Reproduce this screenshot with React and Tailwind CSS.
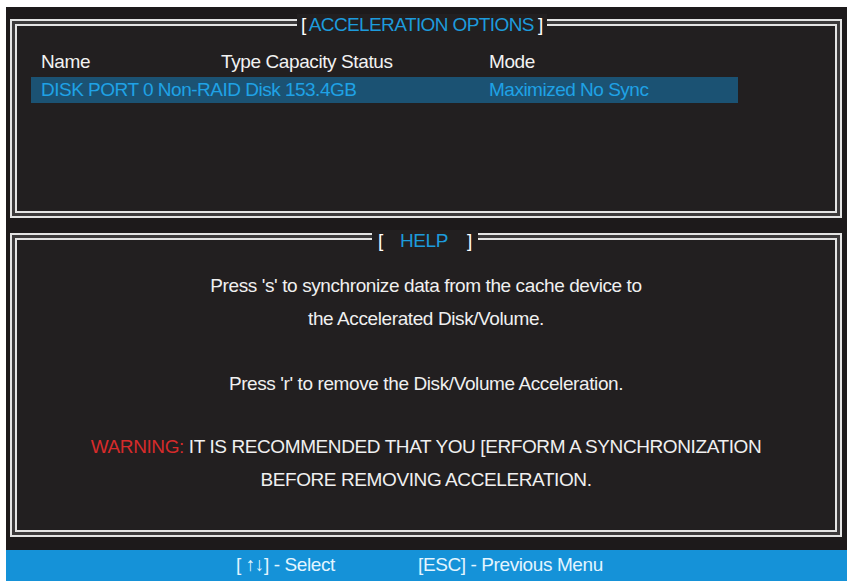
export default function App() {
  const font = { fontFamily: '"Liberation Sans", Arial, sans-serif' };
  return (
    <div className="h-[585px] w-[851px] bg-white pl-[6px] pt-[7px]" style={font}>
      <div className="w-[841px] bg-[#1d1a1b] pl-[4px] pr-[5px] pt-[12px]">
        {/* acceleration options */}
        <div className="relative h-[199px] border-2 border-[#e4e4e4] bg-[#3c3a3b] p-[3px]">
          <div className="h-full border-2 border-[#e4e4e4] bg-[#221f20]">
            <div className="flex pl-[24px] pt-[25px] text-[19px] leading-[22px] tracking-[-0.4px] text-[#f2f2f2]">
              <span className="w-[180px]">Name</span>
              <span className="w-[268px]">Type Capacity Status</span>
              <span>Mode</span>
            </div>
            <div className="ml-[14px] mt-[4px] flex h-[26px] w-[707px] items-center bg-[#1b5273] pl-[10px] text-[19px] tracking-[-0.5px] text-[#1fa2e6]">
              <span className="w-[448px]">DISK PORT 0 Non-RAID Disk 153.4GB</span>
              <span>Maximized No Sync</span>
            </div>
          </div>
          <div className="absolute left-[285px] top-[-7px] flex bg-[#221f20] px-[4px] text-[19px] leading-[22px] tracking-[-0.6px]">
            <span className="text-white">[</span>
            <span className="ml-[3px] text-[#1d9bdc]">ACCELERATION OPTIONS</span>
            <span className="ml-[4px] text-white">]</span>
          </div>
        </div>

        {/* help */}
        <div className="relative mt-[15px] h-[304px] border-2 border-[#e4e4e4] bg-[#3c3a3b] p-[3px]">
          <div className="flex h-full flex-col items-center border-2 border-[#e4e4e4] bg-[#221f20] pt-[29px] text-[19px] leading-[33px] tracking-[-0.4px] text-[#f0f0f0]">
            <p>Press 's' to synchronize data from the cache device to</p>
            <p>the Accelerated Disk/Volume.</p>
            <p className="mt-[32px]">Press 'r' to remove the Disk/Volume Acceleration.</p>
            <p className="mt-[30px]">
              <span className="text-[#d62b2b]">WARNING: </span>IT IS RECOMMENDED THAT YOU [ERFORM A SYNCHRONIZATION
            </p>
            <p>BEFORE REMOVING ACCELERATION.</p>
          </div>
          <div className="absolute left-[360px] top-[-5px] flex bg-[#221f20] px-[6px] text-[19px] leading-[22px] tracking-[-0.4px]">
            <span className="text-white">[</span>
            <span className="ml-[17px] text-[#1d9bdc]">HELP</span>
            <span className="ml-[19px] text-white">]</span>
          </div>
        </div>
        <div className="h-[13px]" />
      </div>

      {/* key bar */}
      <div className="flex h-[31px] w-[841px] items-center bg-[#1592d8] text-[19px] tracking-[-0.4px] text-[#e3f5ff]">
        <span className="ml-[230px] w-[182px]">[ ↑↓] - Select</span>
        <span>[ESC] - Previous Menu</span>
      </div>
    </div>
  );
}
